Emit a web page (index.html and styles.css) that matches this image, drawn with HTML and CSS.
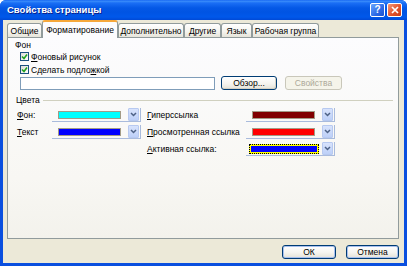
FILE: index.html
```html
<!DOCTYPE html>
<html lang="ru">
<head>
<meta charset="utf-8">
<title>Свойства страницы</title>
<link rel="stylesheet" href="styles.css">
</head>
<body>
<div class="window">
  <div class="titlebar">
    <span class="title">Свойства страницы</span>
    <div class="tb-btns">
      <span class="tb-btn help">?</span>
      <span class="tb-btn close"><svg width="8" height="8" viewBox="0 0 8 8"><path d="M1 1l6 6M7 1l-6 6" stroke="#fff" stroke-width="1.7" fill="none"/></svg></span>
    </div>
  </div>
  <div class="client">
    <div class="tabs">
      <span class="tab t-general">Общие</span>
      <span class="tab sel t-format">Форматирование</span>
      <span class="tab t-extra">Дополнительно</span>
      <span class="tab t-other">Другие</span>
      <span class="tab t-lang">Язык</span>
      <span class="tab t-group">Рабочая группа</span>
    </div>
    <div class="panel">
      <div class="legend">Фон</div>
      <div class="cb-row">
        <span class="cb"><svg width="7" height="7" viewBox="0 0 7 7"><path d="M1 3.5l2 2 3-4" stroke="#21a121" stroke-width="1.6" fill="none"/></svg></span>
        <span><u>Ф</u>оновый рисунок</span>
      </div>
      <div class="cb-row">
        <span class="cb"><svg width="7" height="7" viewBox="0 0 7 7"><path d="M1 3.5l2 2 3-4" stroke="#21a121" stroke-width="1.6" fill="none"/></svg></span>
        <span>Сделать подло<u>ж</u>кой</span>
      </div>
      <div class="field-row">
        <span class="input"></span>
        <span class="btn browse">Обзор...</span>
        <span class="btn props disabled">Свойства</span>
      </div>
      <div class="section">Цвета</div>
      <div class="colors">
        <span class="lbl"><u>Ф</u>он:</span>
        <span class="combo"><span class="swatch cyan"></span><span class="dd"><svg width="7" height="5" viewBox="0 0 7 5"><path d="M1 1l2.5 2.5L6 1" stroke="#4d6185" stroke-width="1.5" fill="none"/></svg></span></span>
        <span class="lbl2"><u>Г</u>иперссылка</span>
        <span class="combo"><span class="swatch maroon"></span><span class="dd"><svg width="7" height="5" viewBox="0 0 7 5"><path d="M1 1l2.5 2.5L6 1" stroke="#4d6185" stroke-width="1.5" fill="none"/></svg></span></span>

        <span class="lbl"><u>Т</u>екст</span>
        <span class="combo"><span class="swatch blue"></span><span class="dd"><svg width="7" height="5" viewBox="0 0 7 5"><path d="M1 1l2.5 2.5L6 1" stroke="#4d6185" stroke-width="1.5" fill="none"/></svg></span></span>
        <span class="lbl2"><u>П</u>росмотренная ссылка</span>
        <span class="combo"><span class="swatch red"></span><span class="dd"><svg width="7" height="5" viewBox="0 0 7 5"><path d="M1 1l2.5 2.5L6 1" stroke="#4d6185" stroke-width="1.5" fill="none"/></svg></span></span>

        <span class="lbl2 col3"><u>А</u>ктивная ссылка:</span>
        <span class="combo"><span class="focus"><span class="swatch-in blue"></span></span><span class="dd"><svg width="7" height="5" viewBox="0 0 7 5"><path d="M1 1l2.5 2.5L6 1" stroke="#4d6185" stroke-width="1.5" fill="none"/></svg></span></span>
      </div>
    </div>
    <div class="footer">
      <span class="btn ok default">ОК</span>
      <span class="btn cancel default">Отмена</span>
    </div>
  </div>
</div>
</body>
</html>
```

FILE: styles.css
```css
* { box-sizing: border-box; }
html, body { margin: 0; padding: 0; background: #fff; }
body {
  font-family: "Liberation Sans", Arial, sans-serif;
  font-size: 8.5px;
  color: #000;
  line-height: 10px;
}
.window {
  width: 407px;
  height: 266px;
  background: #0a4fdf;
  border-radius: 6px 6px 0 0;
  display: flex;
  flex-direction: column;
  overflow: hidden;
}
.titlebar {
  height: 20px;
  flex: none;
  display: flex;
  align-items: center;
  padding: 0 5px 0 7px;
  background: linear-gradient(to bottom, #0a5af0 0, #3d8ffb 1px, #1a6ef5 3px, #0458e6 8px, #0054e3 12px, #0058ea 17px, #0049d6 20px);
}
.title {
  flex: 1;
  color: #fff;
  font-weight: bold;
  font-size: 9.5px;
  text-shadow: 1px 1px 0 #0b1f8a;
}
.tb-btns { display: flex; gap: 2px; }
.tb-btn {
  width: 15px;
  height: 14px;
  border: 1px solid #fff;
  border-radius: 2px;
  display: flex;
  align-items: center;
  justify-content: center;
  color: #fff;
  font-weight: bold;
  font-size: 10px;
}
.help { background: linear-gradient(135deg, #6aa6ff, #2c6ae6 60%, #1b50cf); }
.close { background: linear-gradient(135deg, #f39a7b, #e2532c 55%, #c83d18); }
.client {
  flex: 1;
  margin: 0 3px 3px;
  background: #ece9d8;
  display: flex;
  flex-direction: column;
}
.tabs {
  height: 17px;
  flex: none;
  display: flex;
  align-items: flex-end;
  padding-left: 4px;
}
.tab {
  height: 14px;
  border: 1px solid #919b9c;
  border-bottom: none;
  border-radius: 3px 3px 0 0;
  background: linear-gradient(#ffffff, #f4f3ee 60%, #e6e4da);
  display: flex;
  align-items: center;
  justify-content: center;
  white-space: nowrap;
}
.tab.sel {
  height: 18px;
  margin-bottom: -1px;
  position: relative;
  z-index: 1;
  background: #fcfcfe;
  border-top: 2px solid #f6a83b;
  padding-bottom: 1px;
}
.t-general { width: 35px; }
.t-format { width: 76px; }
.t-extra { width: 66px; }
.t-other { width: 37px; }
.t-lang { width: 31px; }
.t-group { width: 67px; }
.panel {
  height: 202px;
  flex: none;
  margin: 0 5px 0 4px;
  border: 1px solid #919b9c;
  background: linear-gradient(#fcfcfe, #f8f7f3 70%, #f3f2ec);
  padding: 2px 5px 0 7px;
  display: flex;
  flex-direction: column;
}
.legend { height: 10px; }
.cb-row {
  height: 13px;
  display: flex;
  align-items: center;
  gap: 2px;
  margin-left: 5px;
}
.cb {
  width: 9px;
  height: 9px;
  border: 1px solid #1c5180;
  background: linear-gradient(135deg, #dcdcd7, #ffffff);
  display: flex;
  align-items: center;
  justify-content: center;
}
.field-row {
  height: 14px;
  display: flex;
  align-items: center;
  margin-left: 5px;
}
.input {
  width: 195px;
  height: 13px;
  border: 1px solid #7f9db9;
  background: #fff;
}
.btn {
  height: 14px;
  border: 1px solid #003c74;
  border-radius: 3px;
  background: linear-gradient(#ffffff, #f5f4ef 55%, #e4e2d7);
  box-shadow: inset -1px -1px 0 #d6d2c4;
  display: flex;
  align-items: center;
  justify-content: center;
  white-space: nowrap;
}
.browse { width: 56px; margin-left: 6px; }
.props { width: 57px; margin-left: 8px; }
.btn.disabled {
  border-color: #c9c7ba;
  background: #f5f4ea;
  box-shadow: none;
  color: #aca899;
}
.btn.default { box-shadow: inset 0 0 0 1px #a8c0ee; }
.section {
  height: 10px;
  margin-top: 5px;
  margin-left: 1px;
  display: flex;
  align-items: center;
}
.section::after {
  content: "";
  flex: 1;
  height: 1px;
  margin-left: 3px;
  background: #d0d0bf;
}
.colors {
  margin-top: 3px;
  margin-left: 2px;
  display: grid;
  grid-template-columns: 35px 89px 105px 89px;
  grid-auto-rows: 14px;
  row-gap: 3px;
  align-items: center;
}
.lbl2 { padding-left: 6px; white-space: nowrap; }
.col3 { grid-column: 3; }
.combo {
  height: 14px;
  display: flex;
  align-items: center;
  padding-left: 6px;
  border-right: 1px solid #a9bbdc;
  border-bottom: 1px solid #a9bbdc;
}
.swatch {
  width: 63px;
  height: 8px;
  border: 1px solid #a29b86;
}
.cyan { background: #00ffff; }
.blue { background: #0000ff; }
.maroon { background: #800000; }
.red { background: #ff0000; }
.focus {
  margin-left: -3px;
  border: 1px dotted #000;
  background: #ffff00;
  padding: 1px;
  display: flex;
}
.swatch-in {
  width: 66px;
  height: 6px;
}
.dd {
  margin-left: auto;
  margin-right: 1px;
  width: 11px;
  height: 13px;
  border: 1px solid #b7c9f0;
  border-radius: 1px;
  background: linear-gradient(#d8e3fc, #bdd0f8);
  display: flex;
  align-items: center;
  justify-content: center;
}
.footer {
  margin-top: 6px;
  padding-right: 5px;
  display: flex;
  justify-content: flex-end;
  gap: 10px;
}
.ok { width: 54px; }
.cancel { width: 53px; }
```
